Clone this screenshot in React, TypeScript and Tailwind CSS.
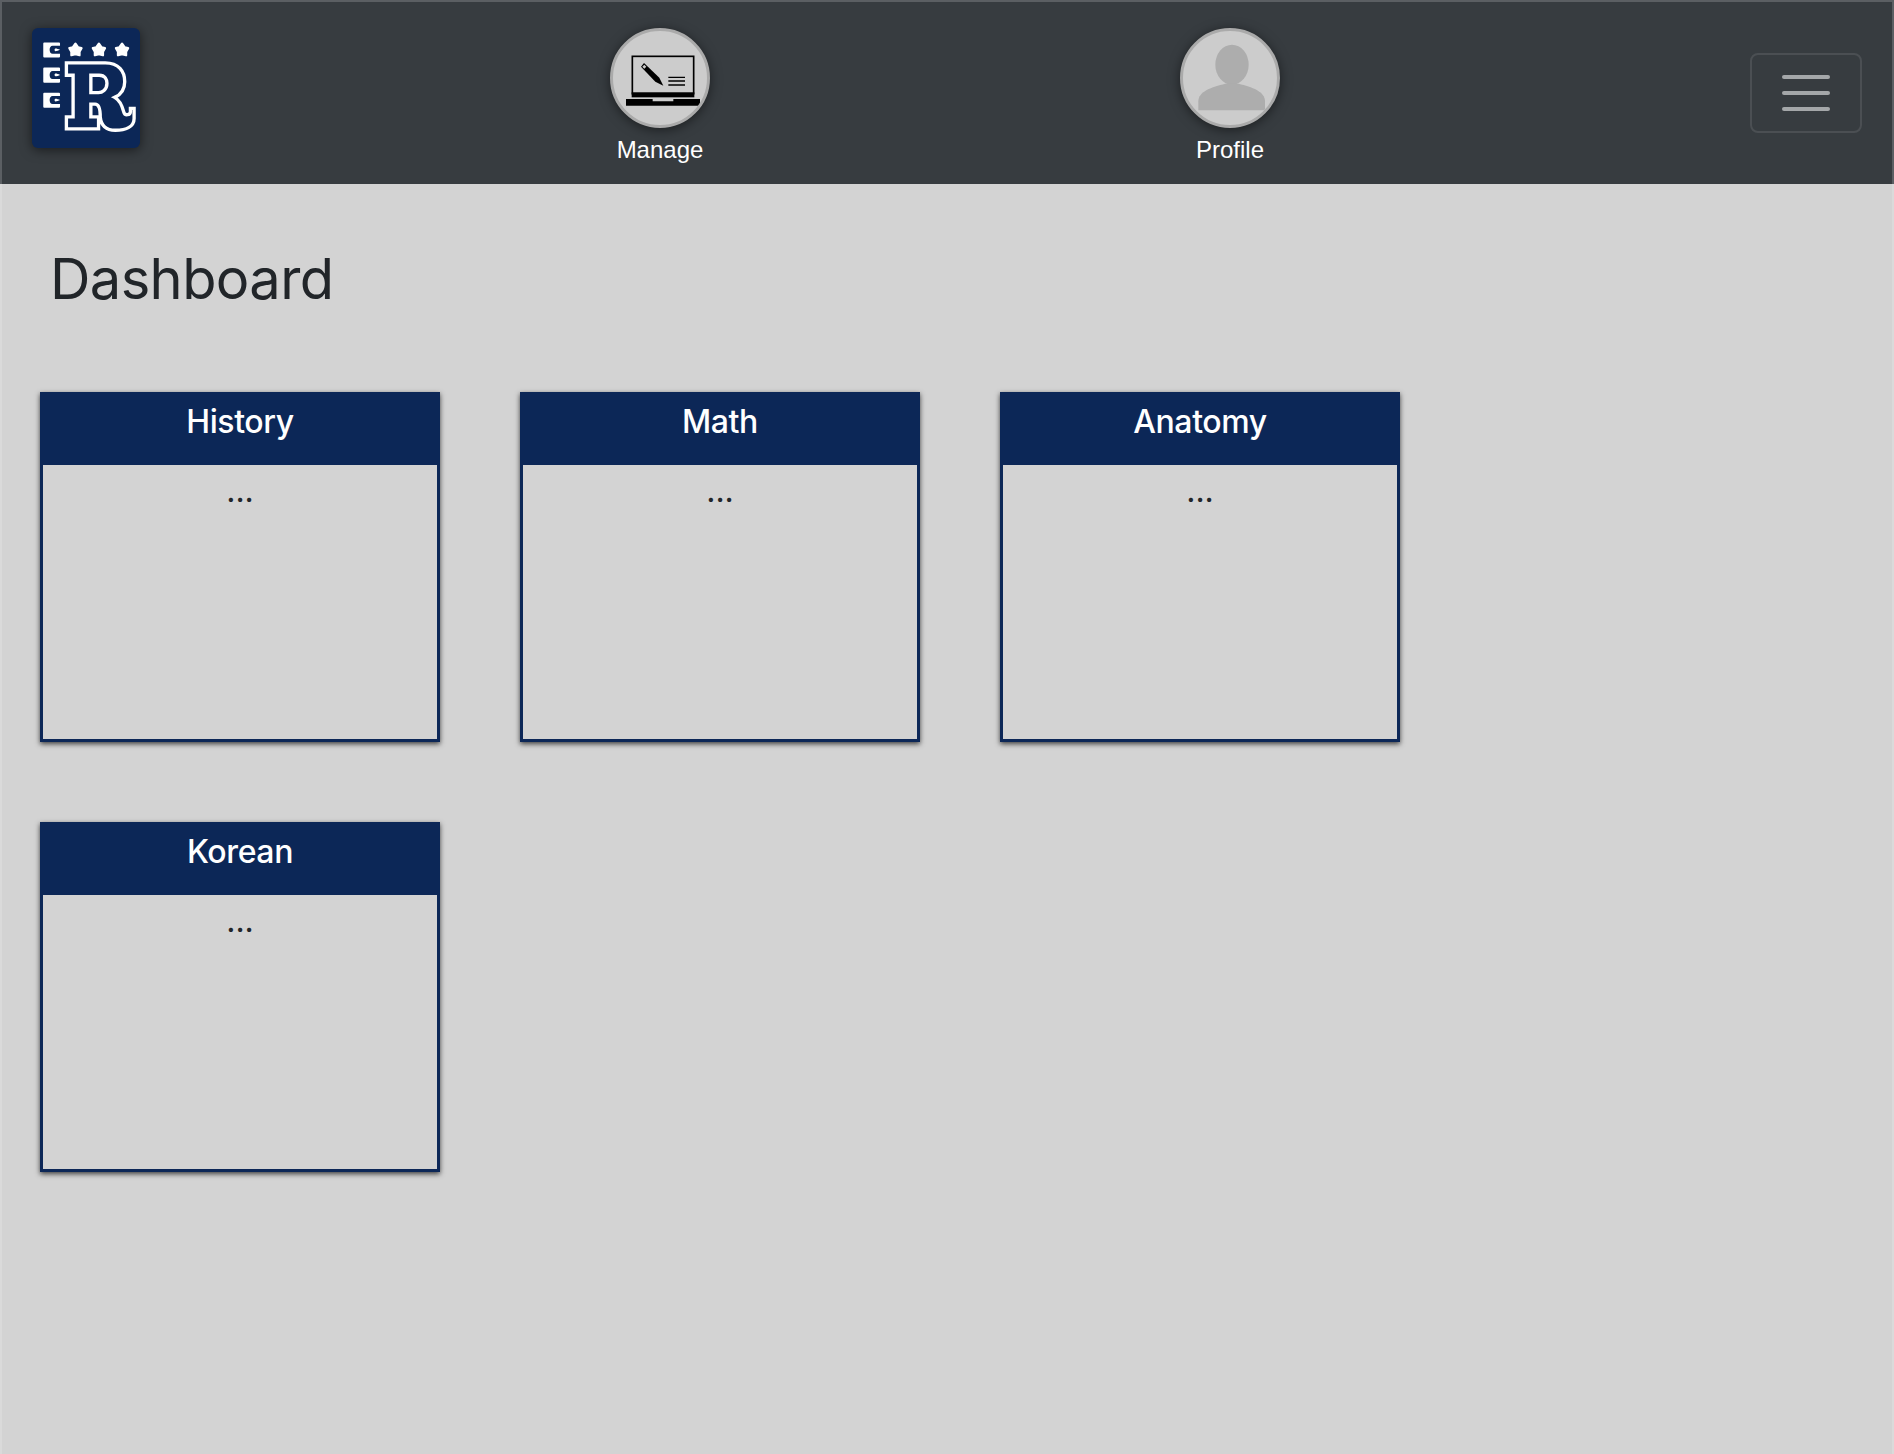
const SANS = "font-['Inter',sans-serif]";

function Logo() {
  const star = (cx: number) => (
    <path
      key={cx}
      transform={`translate(${cx} 150)`}
      d="M0,-18 L8,-7 L18,-5 L12,6 L12,16 L0,13 L-12,16 L-12,6 L-18,-5 L-8,-7 Z"
      fill="#fff"
      stroke="#fff"
      strokeWidth="7"
      strokeLinejoin="round"
    />
  );
  const box = (y: number) => (
    <path
      key={y}
      transform={`translate(130 ${y})`}
      d="M3,0 H47 Q50,0 50,3 V10 H28 C22,10 19,15 19,22 C19,29 22,34 28,34 H50 V42 Q50,45 47,45 H3 Q0,45 0,42 V3 Q0,0 3,0 Z M36,18 C40,18 46,20 50,22 C46,24 40,26 36,26 C33,25 33,19 36,18 Z"
      fill="#fff"
    />
  );
  return (
    <div className="w-[108px] h-[120px] rounded-[6px] bg-[#0c2757] shadow-[0_2px_12px_rgba(0,0,0,0.55)] shrink-0">
      <svg viewBox="97 85 321 358" className="w-full h-full block" aria-hidden="true">
        {[128, 203, 278].map(box)}
        {[226, 296, 365].map(star)}
        <path
          d="M199,189 H315 C355,189 373,215 373,245 C373,270 358,285 343,292 C358,300 366,320 370,335 C373,348 390,345 390,335 V325 H401 V355 C401,380 375,390 345,390 C320,390 303,380 300,350 C300,330 298,312 285,312 H272 V350 H295 V386 H199 V350 H219 V226 H199 Z"
          fill="#0c2757"
          stroke="#fff"
          strokeWidth="10"
        />
        <path
          d="M272,226 H297 C315,226 320,240 320,250 C320,270 305,278 295,278 H272 Z"
          fill="#0c2757"
          stroke="#fff"
          strokeWidth="10"
        />
      </svg>
    </div>
  );
}

function LaptopIcon() {
  return (
    <svg viewBox="99 64 282 282" className="w-full h-full block" aria-hidden="true">
      <rect x="157" y="140" width="184" height="112" fill="none" stroke="#000" strokeWidth="5" />
      <rect x="155" y="248" width="188" height="15" fill="#000" />
      <path d="M138,268 H218 V275 H280 V268 H360 V288 H138 Z" fill="#000" />
      <path d="M183,171 L192,160 L238,204 L250,228 L226,216 Z" fill="#000" />
      <path d="M187,171 L193,165 L199,171 L193,177 Z" fill="#ccc" />
      <path d="M265,203 H315 M265,214 H315 M265,226 H315" stroke="#000" strokeWidth="4" />
    </svg>
  );
}

function PersonIcon() {
  return (
    <svg viewBox="99 64 282 282" className="w-full h-full block" aria-hidden="true">
      <ellipse cx="246" cy="165" rx="50" ry="60" fill="#adadad" />
      <path
        d="M145,302 V275 C145,245 185,232 226,222 H266 C306,232 345,245 345,275 V302 Z"
        fill="#adadad"
      />
    </svg>
  );
}

function NavItem({ label, children }: { label: string; children: React.ReactNode }) {
  return (
    <a className="flex flex-col items-center w-[100px] mt-[26px] font-['Liberation_Sans',sans-serif] text-[24px] leading-[36px] text-white">
      <div className="w-[100px] h-[100px] rounded-full bg-[#ccc] border-[3px] border-[#aaa] shadow-[0_2px_12px_rgba(0,0,0,0.5)] overflow-hidden">
        {children}
      </div>
      <span className="mt-[4px]">{label}</span>
    </a>
  );
}

function Card({ title }: { title: string }) {
  return (
    <div className="h-[350px] border-[3px] border-[#0c2757] bg-[#d3d3d3] shadow-[0_2px_5px_rgba(0,0,0,0.7)] flex flex-col">
      <div className={`h-[70px] bg-[#0c2757] text-white text-center text-[32px] leading-[53px] tracking-[-0.4px] font-medium ${SANS}`}>
        {title}
      </div>
      <p className={`text-center text-[#212529] text-[32px] leading-[36px] pt-[8px] ${SANS}`}>...</p>
    </div>
  );
}

export default function App() {
  return (
    <div className="min-h-screen bg-[#d3d3d3]">
      <nav className="h-[184px] bg-[#373c40] border-2 border-[#5b5f63] border-b-0 flex justify-between items-start px-[30px]">
        <div className="mt-[26px]">
          <Logo />
        </div>
        <NavItem label="Manage">
          <LaptopIcon />
        </NavItem>
        <NavItem label="Profile">
          <PersonIcon />
        </NavItem>
        <button className="mt-[51px] w-[112px] h-[80px] rounded-[8px] border-2 border-[rgba(255,255,255,0.1)] flex flex-col items-center justify-center gap-[12px]">
          <span className="block w-[48px] h-[4px] rounded-full bg-[rgba(255,255,255,0.55)]" />
          <span className="block w-[48px] h-[4px] rounded-full bg-[rgba(255,255,255,0.55)]" />
          <span className="block w-[48px] h-[4px] rounded-full bg-[rgba(255,255,255,0.55)]" />
        </button>
      </nav>
      <main className="min-h-[1270px] border-x-2 border-[#dadada] pl-[38px] pt-[60px]">
        <h1 className={`pl-[10px] text-[56px] leading-[70px] font-normal tracking-[-0.6px] text-[#212529] ${SANS}`}>Dashboard</h1>
        <div className="mt-[78px] grid grid-cols-[repeat(3,400px)] gap-[80px]">
          {["History", "Math", "Anatomy", "Korean"].map((t) => (
            <Card key={t} title={t} />
          ))}
        </div>
      </main>
    </div>
  );
}
